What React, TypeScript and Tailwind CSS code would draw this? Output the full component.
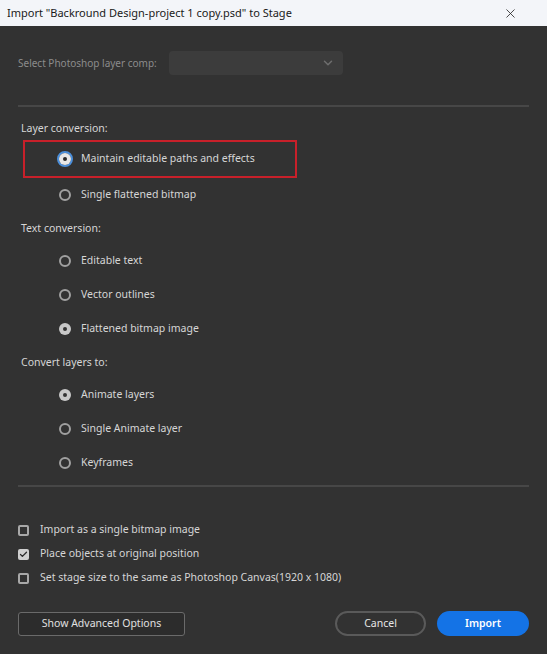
import { X, ChevronDown, Check } from "lucide-react"

function Radio({ label, state }: { label: string; state: "off" | "on" | "focus" }) {
  return (
    <div className="flex items-center h-[34px] pl-[41px] gap-[10px]">
      {state === "focus" ? (
        <span className="w-[16px] h-[16px] -ml-[2px] -mr-[2px] rounded-full border-[2px] border-[#4b8fdb] flex items-center justify-center">
          <span className="w-[12px] h-[12px] rounded-full bg-[#e8e8e8] flex items-center justify-center">
            <span className="w-[4px] h-[4px] rounded-full bg-[#2a2a2a]" />
          </span>
        </span>
      ) : state === "on" ? (
        <span className="w-[12px] h-[12px] rounded-full bg-[#c8c8c8] flex items-center justify-center">
          <span className="w-[4px] h-[4px] rounded-full bg-[#333]" />
        </span>
      ) : (
        <span className="w-[12px] h-[12px] rounded-full border-[2px] border-[#a0a0a0]" />
      )}
      <span className="text-[10.5px] text-[#d6d6d6]">{label}</span>
    </div>
  )
}

function Heading({ children }: { children: string }) {
  return <div className="text-[10.5px] text-[#d6d6d6] pl-[3px] h-[32px] pt-[2px] flex items-center">{children}</div>
}

function CheckRow({ label, checked }: { label: string; checked?: boolean }) {
  return (
    <div className="flex items-center h-[24px] gap-[11px]">
      {checked ? (
        <span className="w-[11px] h-[11px] rounded-[2px] bg-[#cfcfcf] flex items-center justify-center">
          <Check size={9} strokeWidth={3.5} className="text-[#2a2a2a]" />
        </span>
      ) : (
        <span className="w-[11px] h-[11px] rounded-[2px] border-[2px] border-[#a8a8a8]" />
      )}
      <span className="text-[10.5px] text-[#d6d6d6]">{label}</span>
    </div>
  )
}

export default function App() {
  return (
    <div className="w-[547px] h-[654px] bg-[#323232] flex flex-col" style={{ fontFamily: '"Noto Sans", "Open Sans", sans-serif' }}>
      <div className="h-[26px] bg-[#f3f5f9] flex items-center justify-between pl-[7px] pr-[29px]">
        <span className="text-[11px] text-[#1a1a1a]">Import "Backround Design-project 1 copy.psd" to Stage</span>
        <X size={15} strokeWidth={1.3} className="text-[#222]" />
      </div>
      <div className="px-[18px] pt-[25px] flex flex-col">
        <div className="flex items-center h-[24px]">
          <span className="w-[151px] text-[10px] text-[#8c8c8c]">Select Photoshop layer comp:</span>
          <div className="w-[174px] h-[24px] rounded-[4px] bg-[#3c3c3c] flex items-center justify-end pr-[8px]">
            <ChevronDown size={14} strokeWidth={2.5} className="text-[#6e6e6e]" />
          </div>
        </div>
        <div className="h-[2px] bg-[#474747] mt-[30px]" />
        <div className="text-[10.5px] text-[#d6d6d6] pl-[3px] mt-[14px] h-[16px]">Layer conversion:</div>
        <div className="ml-[5px] mt-[3px] w-[274px] h-[38px] border-[2px] border-[#c8202a] flex items-center">
          <div className="-ml-[7px]">
            <Radio label="Maintain editable paths and effects" state="focus" />
          </div>
        </div>
        <Radio label="Single flattened bitmap" state="off" />
        <Heading>Text conversion:</Heading>
        <Radio label="Editable text" state="off" />
        <Radio label="Vector outlines" state="off" />
        <Radio label="Flattened bitmap image" state="on" />
        <Heading>Convert layers to:</Heading>
        <Radio label="Animate layers" state="on" />
        <Radio label="Single Animate layer" state="off" />
        <Radio label="Keyframes" state="off" />
        <div className="h-[2px] bg-[#474747] mt-[5px]" />
        <div className="flex flex-col mt-[31px]">
          <CheckRow label="Import as a single bitmap image" />
          <CheckRow label="Place objects at original position" checked />
          <CheckRow label="Set stage size to the same as Photoshop Canvas(1920 x 1080)" />
        </div>
        <div className="flex items-center justify-between mt-[21px]">
          <button className="w-[167px] h-[24px] rounded-[3px] border border-[#6a6a6a] bg-[#2c2c2c] text-[10.5px] text-[#e0e0e0]">
            Show Advanced Options
          </button>
          <div className="flex items-center gap-[11px]">
            <button className="w-[91px] h-[25px] rounded-full border-[2px] border-[#5a5a5a] text-[10.5px] text-[#e6e6e6]">
              Cancel
            </button>
            <button className="w-[92px] h-[25px] rounded-full bg-[#1473e6] text-[10.5px] text-white font-semibold">
              Import
            </button>
          </div>
        </div>
      </div>
    </div>
  )
}
